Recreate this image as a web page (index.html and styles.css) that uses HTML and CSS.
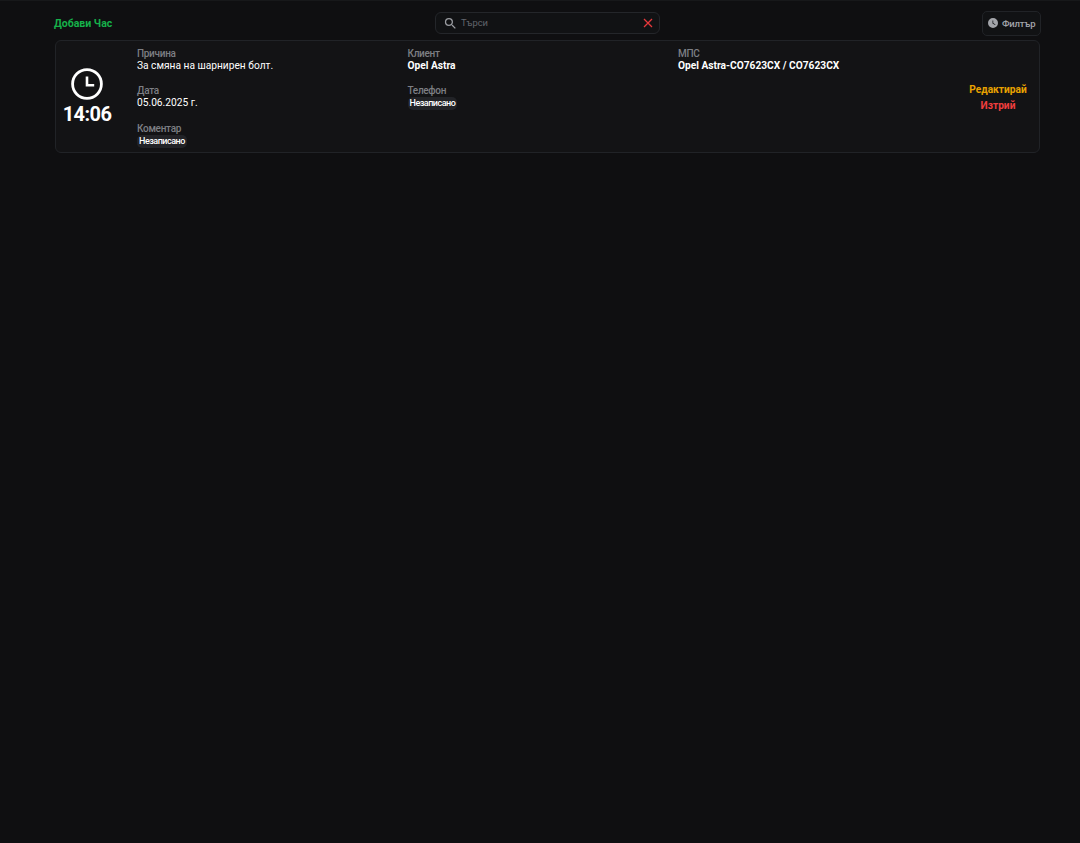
FILE: index.html
```html
<!DOCTYPE html>
<html lang="bg">
<head>
<meta charset="utf-8">
<title>Часове</title>
<link rel="stylesheet" href="styles.css">
</head>
<body>
<main class="page">
  <header class="toolbar">
    <a class="add" href="#">Добави Час</a>
    <div class="search">
      <svg class="search-icon" viewBox="0 0 24 24" width="15" height="15"><path fill="#9a9ca1" d="M15.5 14h-.79l-.28-.27A6.47 6.47 0 0 0 16 9.5 6.5 6.5 0 1 0 9.5 16c1.61 0 3.09-.59 4.23-1.57l.27.28v.79l5 4.99L20.49 19l-4.99-5zm-6 0C7.01 14 5 11.99 5 9.5S7.01 5 9.5 5 14 7.01 14 9.5 11.99 14 9.5 14z"/></svg>
      <span class="search-text">Търси</span>
      <svg class="close-icon" viewBox="0 0 10 10" width="10" height="10"><path d="M1 1l8 8M9 1l-8 8" stroke="#e5383b" stroke-width="1.3" fill="none"/></svg>
    </div>
    <button class="filter">
      <svg viewBox="0 0 24 24" width="12" height="12"><path fill="#a3a5aa" d="M12 2a10 10 0 1 0 0 20 10 10 0 0 0 0-20zm4.2 14.2L11 13V7h1.5v5.2l4.5 2.7-.8 1.3z"/></svg>
      <span>Филтър</span>
    </button>
  </header>
  <article class="card">
    <div class="time">
      <svg viewBox="0 0 32 32" width="32" height="32"><circle cx="16" cy="16" r="14.4" fill="none" stroke="#fff" stroke-width="2.8"/><path d="M16 8.5V17.3h7.2" fill="none" stroke="#fff" stroke-width="2.6"/></svg>
      <div class="clock">14:06</div>
    </div>
    <div class="details">
      <div class="field"><div class="label">Причина</div><div class="value">За смяна на шарнирен болт.</div></div>
      <div class="field"><div class="label">Клиент</div><div class="value strong">Opel Astra</div></div>
      <div class="field"><div class="label">МПС</div><div class="value strong">Opel Astra-CO7623CX / CO7623CX</div></div>
      <div class="field"><div class="label">Дата</div><div class="value">05.06.2025 г.</div></div>
      <div class="field"><div class="label">Телефон</div><div class="chip-row"><span class="chip">Незаписано</span></div></div>
      <div class="field"></div>
      <div class="field"><div class="label">Коментар</div><div class="chip-row"><span class="chip">Незаписано</span></div></div>
    </div>
    <div class="actions">
      <a class="edit" href="#">Редактирай</a>
      <a class="delete" href="#">Изтрий</a>
    </div>
  </article>
</main>
</body>
</html>
```
FILE: styles.css
```css
* { box-sizing: border-box; }
html, body { margin: 0; height: 100%; }
body {
  background: #0f0f11;
  color: #fff;
  font-family: Roboto, "Noto Sans", sans-serif;
  font-size: 10.2px;
  border-top: 1px solid #17181a;
}
a { text-decoration: none; }
.page { padding: 9px 39px 0 54px; }
.toolbar {
  display: grid;
  grid-template-columns: 1fr 225px 1fr;
  align-items: center;
  height: 26px;
  margin-bottom: 4px;
}
.add { color: #16b14a; font-weight: 700; font-size: 10.5px; }
.search {
  display: flex;
  align-items: center;
  height: 22px;
  padding: 0 6px 0 7px;
  border: 1px solid #24262a;
  border-radius: 6px;
  background: #111214;
}
.search-icon { margin-right: 3px; }
.search-text { flex: 1; padding-bottom: 1px; color: #62656c; font-size: 9.4px; }
.filter {
  justify-self: end;
  display: flex;
  align-items: center;
  gap: 3px;
  width: 59px;
  height: 25px;
  padding: 0 0 0 4px;
  border: 1px solid #212327;
  border-radius: 5px;
  background: #111214;
  color: #a3a5aa;
  font: 500 9.5px Roboto, sans-serif;
  letter-spacing: -0.2px;
}
.card {
  display: flex;
  width: 985px;
  height: 113px;
  margin-left: 1px;
  border: 1px solid #212327;
  border-radius: 6px;
  background: #131315;
}
.time {
  flex: 0 0 81px;
  display: flex;
  flex-direction: column;
  align-items: center;
  justify-content: center;
  padding-right: 19px;
}
.clock { font-size: 20px; font-weight: 700; line-height: 24px; margin-top: 2px; letter-spacing: -0.6px; }
.details {
  flex: 1;
  display: grid;
  grid-template-columns: repeat(3, 270.5px);
  grid-auto-rows: 37.3px;
  padding-top: 7px;
}
.label { color: #7d7f84; font-weight: 500; font-size: 10px; line-height: 11px; letter-spacing: -0.3px; }
.value { font-size: 10.2px; line-height: 13px; }
.strong { font-weight: 700; }
.chip-row { padding-top: 1px; }
.chip {
  display: inline-block;
  padding: 0 2px;
  border-radius: 5px;
  background: #222327;
  font-size: 9px;
  font-weight: 500;
  line-height: 13px;
  letter-spacing: -0.5px;
}
.actions {
  flex: 0 0 82px;
  display: flex;
  flex-direction: column;
  align-items: center;
  gap: 3px;
  padding-top: 42px;
  font-size: 10.2px;
  font-weight: 700;
  line-height: 13px;
  white-space: nowrap;
}
.actions .edit { color: #e8a200; }
.actions .delete { color: #f03e3e; }
```
